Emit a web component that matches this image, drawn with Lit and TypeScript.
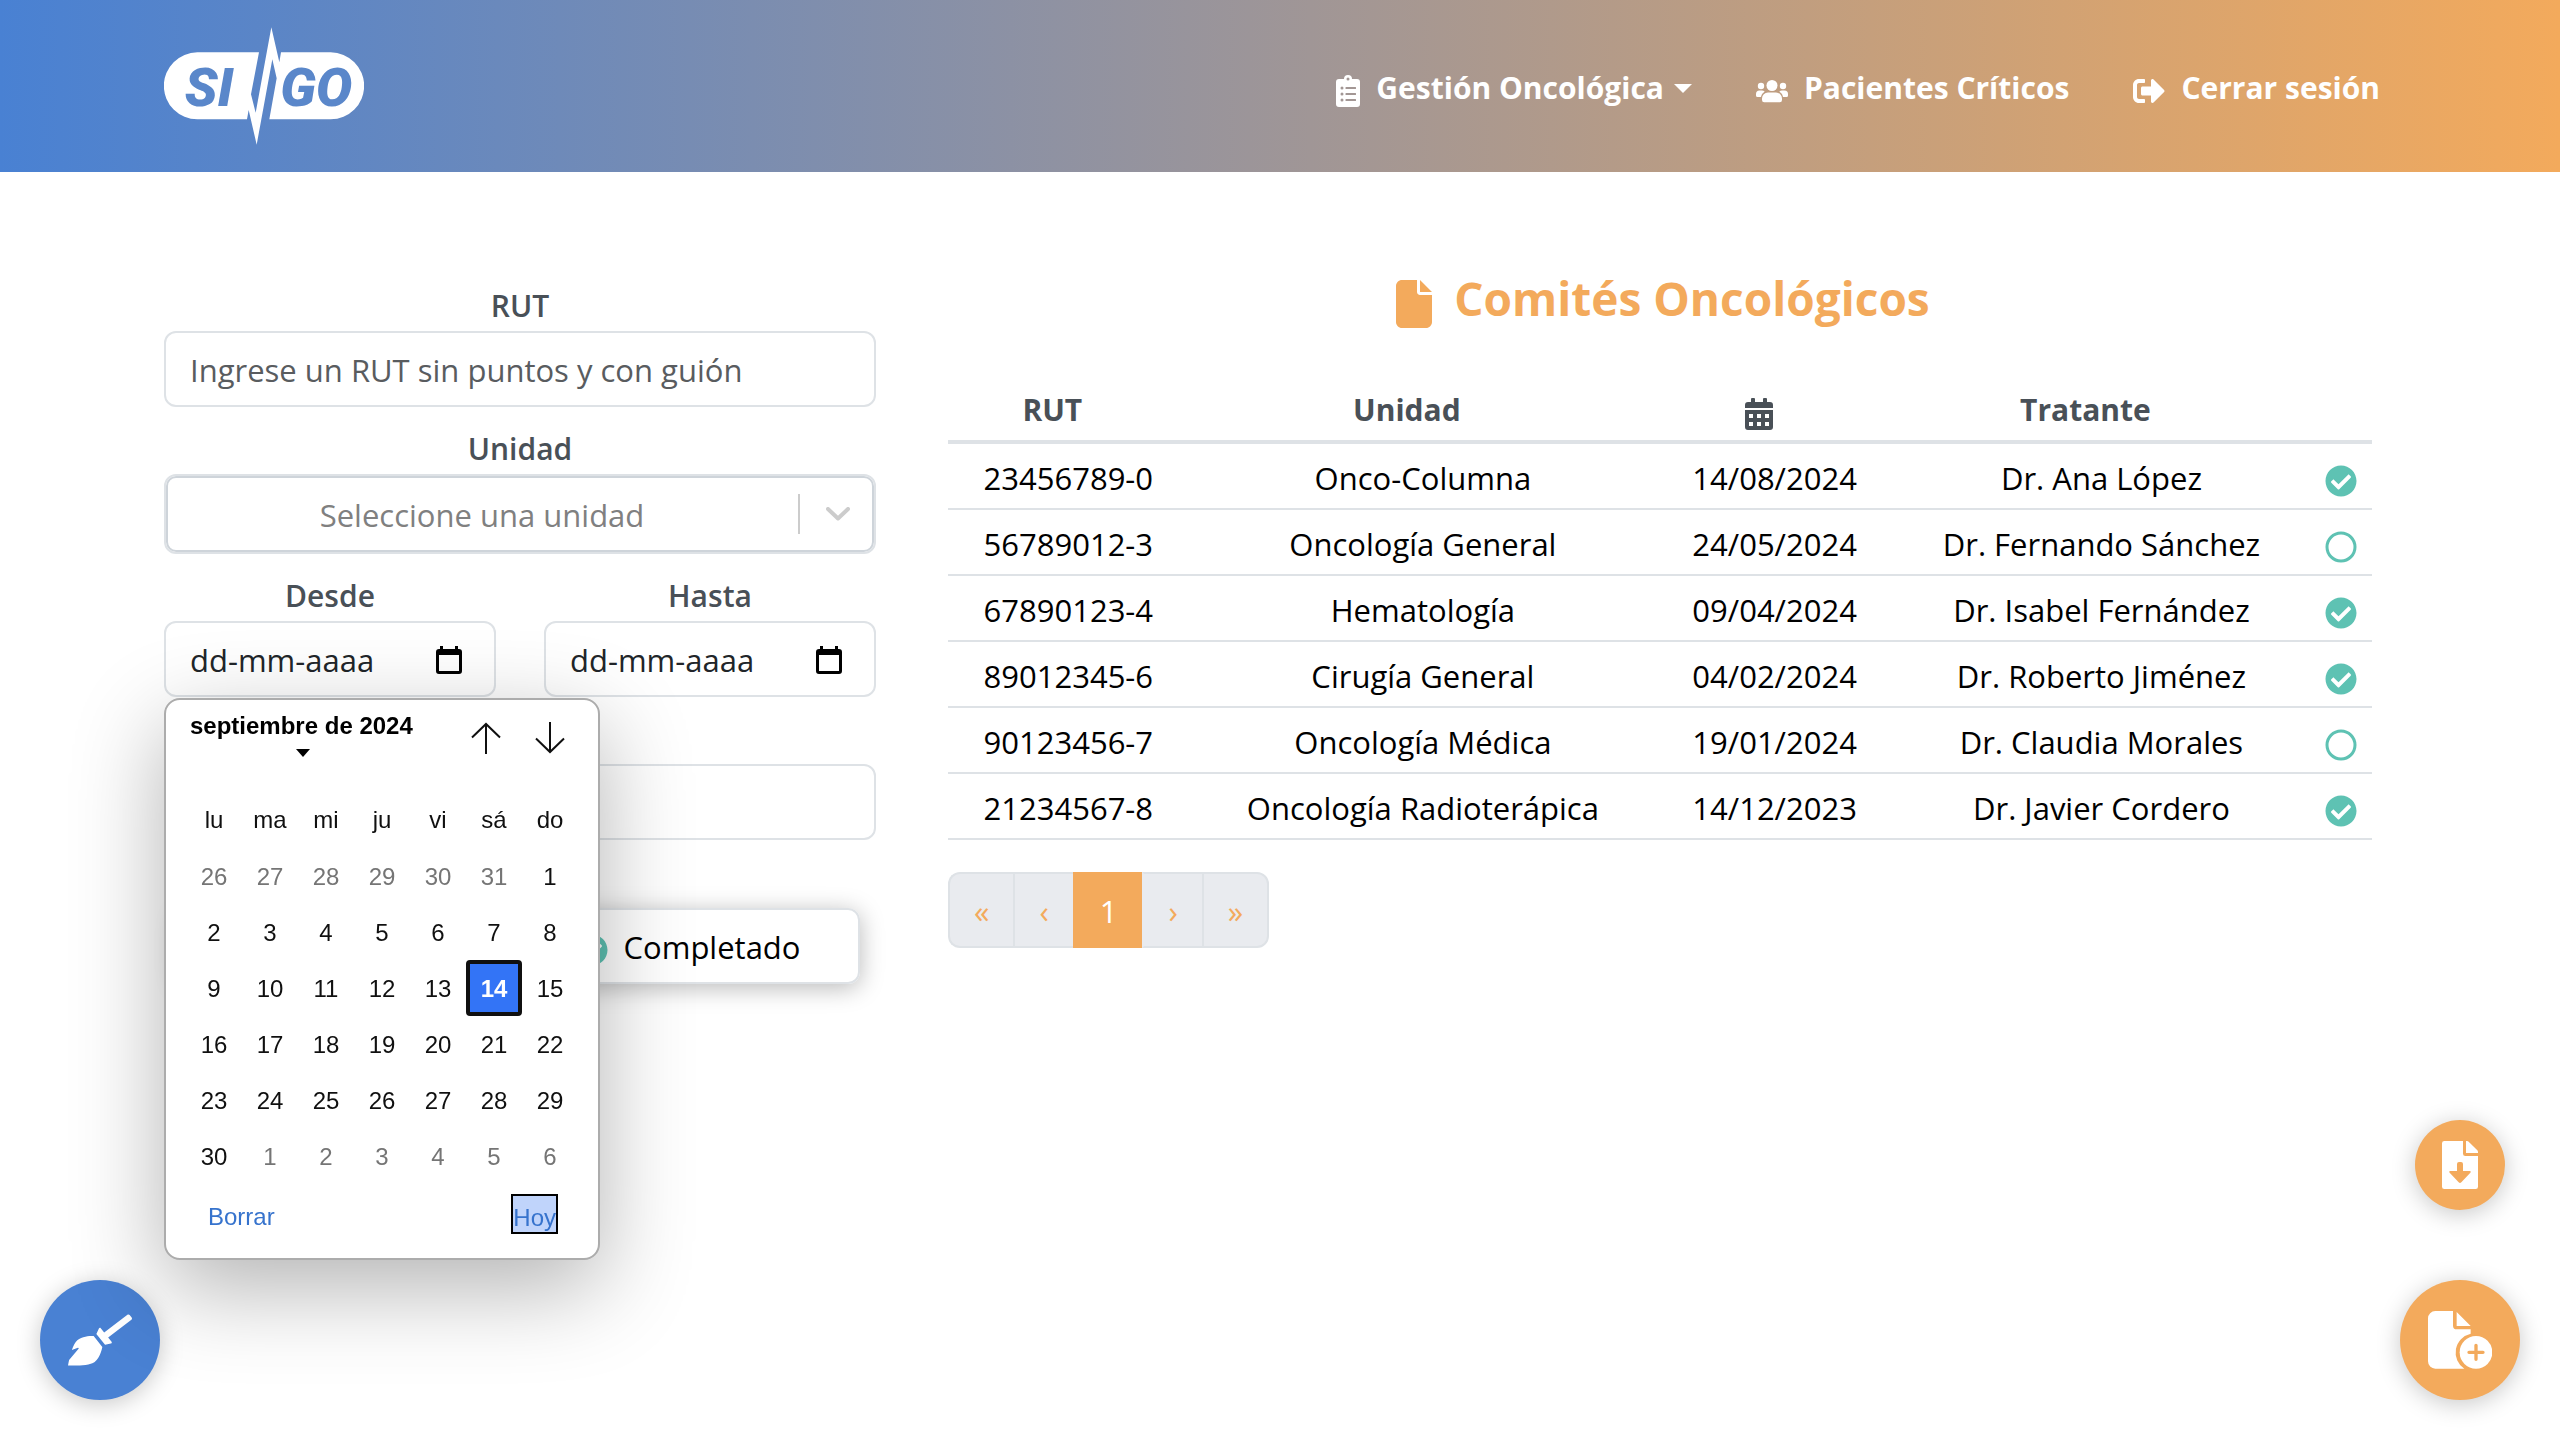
import { LitElement, html, css, nothing } from "lit";
import { customElement, state } from "lit/decorators.js";
import { classMap } from "lit/directives/class-map.js";

interface Comite {
  rut: string;
  unidad: string;
  fecha: string;
  tratante: string;
  completado: boolean;
}

const COMITES: Comite[] = [
  { rut: "23456789-0", unidad: "Onco-Columna", fecha: "14/08/2024", tratante: "Dr. Ana López", completado: true },
  { rut: "56789012-3", unidad: "Oncología General", fecha: "24/05/2024", tratante: "Dr. Fernando Sánchez", completado: false },
  { rut: "67890123-4", unidad: "Hematología", fecha: "09/04/2024", tratante: "Dr. Isabel Fernández", completado: true },
  { rut: "89012345-6", unidad: "Cirugía General", fecha: "04/02/2024", tratante: "Dr. Roberto Jiménez", completado: true },
  { rut: "90123456-7", unidad: "Oncología Médica", fecha: "19/01/2024", tratante: "Dr. Claudia Morales", completado: false },
  { rut: "21234567-8", unidad: "Oncología Radioterápica", fecha: "14/12/2023", tratante: "Dr. Javier Cordero", completado: true },
];

const DIAS = ["lu", "ma", "mi", "ju", "vi", "sá", "do"];

const iconoCheck = html`<svg class="icon-status" viewBox="0 0 512 512" aria-hidden="true">
  <path fill="currentColor" fill-rule="evenodd" d="M504 256c0 136.967-111.033 248-248 248S8 392.967 8 256 119.033 8 256 8s248 111.033 248 248zM227.314 387.314l184-184c6.248-6.248 6.248-16.379 0-22.627l-22.627-22.627c-6.248-6.249-16.379-6.249-22.628 0L216 308.118l-70.059-70.059c-6.248-6.248-16.379-6.248-22.628 0l-22.627 22.627c-6.248 6.248-6.248 16.379 0 22.627l104 104c6.249 6.249 16.379 6.249 22.628.001z"/>
</svg>`;

const iconoCirculo = html`<svg class="icon-status" viewBox="0 0 32 32" aria-hidden="true">
  <circle cx="16" cy="16" r="14" fill="none" stroke="currentColor" stroke-width="3"/>
</svg>`;

const iconoFecha = html`<svg class="icon-date" viewBox="0 0 26 28" aria-hidden="true">
  <path fill="currentColor" fill-rule="evenodd" d="M4 0h3v3h12V0h3v3h1a3 3 0 0 1 3 3v19a3 3 0 0 1-3 3H3a3 3 0 0 1-3-3V6a3 3 0 0 1 3-3h1zM3 9v16h20V9z"/>
</svg>`;

@customElement("calendar-popup")
export class CalendarPopup extends LitElement {
  @state() private elegido = 14;

  static styles = css`
    :host {
      display: block;
      box-sizing: border-box;
      width: 436px;
      padding: 14px 16px 24px 20px;
      border: 2px solid #acacac;
      border-radius: 16px;
      background: #fff;
      box-shadow: 0 28px 92px rgba(0, 0, 0, 0.3);
      font: 24px/32px "Liberation Sans", Arial, sans-serif;
      color: #101010;
    }
    button {
      margin: 0;
      padding: 0;
      border: 0;
      background: none;
      font: inherit;
      color: inherit;
    }
    .head {
      display: flex;
      align-items: flex-start;
      height: 78px;
      padding: 0 0 0 4px;
    }
    .month {
      display: flex;
      flex-direction: column;
      align-items: center;
      gap: 7px;
      margin-right: auto;
      margin-top: -4px;
      font-weight: bold;
      color: #000;
    }
    .caret {
      width: 14px;
      height: 8px;
      margin-left: 4px;
    }
    .arrow {
      display: grid;
      place-items: center;
      width: 64px;
      padding-top: 8px;
    }
    .arrow svg {
      width: 30px;
      height: 32px;
    }
    table {
      border-collapse: collapse;
      table-layout: fixed;
      width: 392px;
    }
    th,
    td {
      padding: 0;
      height: 56px;
      font-weight: normal;
      text-align: center;
    }
    .day {
      display: block;
      box-sizing: border-box;
      width: 56px;
      height: 56px;
      padding-top: 2px;
    }
    .outside {
      color: #757575;
    }
    .selected {
      border: 4px solid #101010;
      border-radius: 4px;
      background: #3374f6;
      color: #fff;
      font-weight: bold;
    }
    .foot {
      display: flex;
      justify-content: space-between;
      align-items: center;
      padding: 10px 24px 0 22px;
      color: #3673cd;
    }
    .clear,
    .today {
      height: 40px;
      padding: 6px 0 0;
    }
    .today {
      border: 2px solid #000;
      background: #c0d4fb;
    }
  `;

  private semanas() {
    const dias = Array.from({ length: 42 }, (_, i) => {
      const d = i - 5;
      if (d < 1) return { n: d + 31, fuera: true };
      if (d > 30) return { n: d - 30, fuera: true };
      return { n: d, fuera: false };
    });
    return Array.from({ length: 6 }, (_, s) => dias.slice(s * 7, s * 7 + 7));
  }

  render() {
    return html`
      <div class="head">
        <button class="month" type="button">
          septiembre de 2024
          <svg class="caret" viewBox="0 0 14 8" aria-hidden="true"><path fill="currentColor" d="M0 0h14L7 8z"/></svg>
        </button>
        <button class="arrow" type="button" aria-label="Mes anterior">
          <svg viewBox="0 0 30 32" fill="none" stroke="currentColor" stroke-width="2" aria-hidden="true"><path d="M15 32V2M1 15.500 15 2l14 13.500"/></svg>
        </button>
        <button class="arrow" type="button" aria-label="Mes siguiente">
          <svg viewBox="0 0 30 32" fill="none" stroke="currentColor" stroke-width="2" aria-hidden="true"><path d="M15 0v30M1 16.500 15 30l14-13.500"/></svg>
        </button>
      </div>
      <table>
        <thead>
          <tr>${DIAS.map((d) => html`<th scope="col">${d}</th>`)}</tr>
        </thead>
        <tbody>
          ${this.semanas().map(
            (semana) => html`<tr>
              ${semana.map(
                (d) => html`<td>
                  <button
                    type="button"
                    class=${classMap({ day: true, outside: d.fuera, selected: !d.fuera && d.n === this.elegido })}
                    @click=${() => { if (!d.fuera) this.elegido = d.n; }}
                  >${d.n}</button>
                </td>`
              )}
            </tr>`
          )}
        </tbody>
      </table>
      <div class="foot">
        <button class="clear" type="button">Borrar</button>
        <button class="today" type="button">Hoy</button>
      </div>
    `;
  }
}

@customElement("app-root")
export class AppRoot extends LitElement {
  static styles = css`
    :host {
      display: block;
      min-height: 100vh;
      background: #fff;
      font: 30px/48px "Open Sans", "Noto Sans", sans-serif;
      color: #000;
    }
    * {
      box-sizing: border-box;
    }
    button,
    input,
    select {
      margin: 0;
      font: inherit;
      color: inherit;
    }
    svg {
      display: block;
      flex: none;
    }

    .navbar {
      display: flex;
      align-items: center;
      justify-content: space-between;
      height: 172px;
      padding: 0 180px 0 164px;
      background: linear-gradient(to right, #4981d3, #f3aa5c);
    }
    .logo svg {
      width: 200px;
      height: 118px;
    }
    .logo-text {
      font: italic 900 162px Roboto, sans-serif;
      fill: #5a87ca;
    }
    nav {
      display: flex;
      gap: 64px;
      padding-top: 4px;
    }
    nav a {
      display: flex;
      align-items: center;
      gap: 16px;
      color: #fff;
      font-weight: 700;
      text-decoration: none;
    }
    nav svg {
      margin-top: 6px;
    }
    .drop {
      display: flex;
      align-items: center;
      gap: 10px;
    }
    .drop svg {
      width: 18px;
      height: 9px;
      margin-top: 0;
    }

    main {
      display: grid;
      grid-template-columns: minmax(0, 1fr) minmax(0, 2fr);
      gap: 72px;
      align-items: start;
      padding: 90px 188px 64px 164px;
    }

    form {
      display: flex;
      flex-direction: column;
      gap: 18px;
      padding-top: 20px;
    }
    .field {
      display: flex;
      flex-direction: column;
      gap: 1px;
      position: relative;
      min-width: 0;
    }
    .pair {
      display: grid;
      grid-template-columns: minmax(0, 1fr) minmax(0, 1fr);
      gap: 48px;
    }
    label {
      color: #495057;
      font-weight: 600;
      text-align: center;
    }
    .box {
      display: flex;
      align-items: center;
      width: 100%;
      height: 76px;
      padding: 2px 24px 0;
      border: 2px solid #dee2e6;
      border-radius: 12px;
      background: #fff;
      font-size: 31px;
    }
    .box::placeholder {
      color: #595c5f;
      opacity: 1;
    }
    .date-input {
      flex: 1;
      min-width: 0;
      padding: 0;
      border: 0;
      background: none;
    }
    .date-input::placeholder {
      color: #212529;
      opacity: 1;
    }
    .date-button {
      padding: 0 8px;
      border: 0;
      background: none;
    }
    .icon-date {
      width: 26px;
      height: 28px;
    }
    .select-box {
      height: 80px;
      padding: 0;
      box-shadow: inset 0 0 0 2px #ced4da;
    }
    select {
      flex: 1;
      min-width: 0;
      height: 72px;
      padding: 2px 0 0;
      border: 0;
      appearance: none;
      background: none;
      color: #808080;
      text-align: center;
      text-align-last: center;
    }
    .divider {
      width: 2px;
      height: 40px;
      background: #ccc;
    }
    .chevron {
      width: 24px;
      height: 14px;
      margin: 0 24px 0 26px;
      color: #ccc;
    }
    calendar-popup {
      position: absolute;
      z-index: 10;
      top: calc(100% + 1px);
      left: 0;
    }
    .spacer-field {
      padding-top: 49px;
    }
    .group {
      display: grid;
      grid-template-columns: minmax(0, 1fr) minmax(0, 1fr);
      margin: 50px 16px 0;
      border-radius: 12px;
      box-shadow: 0 4px 24px rgba(0, 0, 0, 0.28);
    }
    .toggle {
      display: flex;
      align-items: center;
      justify-content: center;
      gap: 16px;
      height: 76px;
      padding: 2px 8px 0 4px;
      border: 2px solid #dee2e6;
      background: #fff;
      font-size: 31px;
    }
    .toggle:first-child {
      border-radius: 12px 0 0 12px;
    }
    .toggle:last-child {
      border-radius: 0 12px 12px 0;
    }
    .icon-status {
      width: 32px;
      height: 32px;
      color: #5ec2b3;
    }
    .toggle .icon-status {
      margin-top: 6px;
    }

    h1 {
      display: flex;
      align-items: center;
      justify-content: center;
      gap: 22px;
      margin: 0 0 42px;
      padding-left: 6px;
      color: #f3aa5c;
      font-size: 46px;
      font-weight: 700;
      line-height: 72px;
    }
    h1 svg {
      width: 36px;
      height: 48px;
      margin-top: 12px;
    }
    .list {
      width: 100%;
      table-layout: fixed;
      border-collapse: separate;
      border-spacing: 0;
      text-align: center;
      white-space: nowrap;
    }
    .list th {
      padding: 10px 32px 6px 0;
      border-bottom: 4px solid #dee2e6;
      color: #495057;
      font-weight: 700;
    }
    .list td {
      padding: 10px 0 6px;
      border-bottom: 2px solid #dee2e6;
      font-size: 31px;
    }
    .list svg {
      margin: 0 auto;
    }
    .list .icon-status {
      margin-top: 6px;
    }
    .icon-cal {
      width: 28px;
      height: 32px;
    }
    .list th .icon-cal {
      margin-top: 8px;
    }
    .col-rut { width: 16.9%; }
    .col-unidad { width: 32.9%; }
    .col-fecha { width: 16.5%; }
    .col-tratante { width: 29.4%; }
    .col-estado { width: 4.3%; }

    .pages {
      display: flex;
      margin: 32px 0 0;
      padding: 0;
      list-style: none;
    }
    .pages button {
      display: block;
      height: 76px;
      padding: 2px 24px 0;
      border: 2px solid #dee2e6;
      border-right-width: 0;
      background: #e9ebef;
      color: #f3aa5c;
      font-size: 31px;
    }
    .pages li:first-child button {
      border-radius: 12px 0 0 12px;
    }
    .pages li:last-child button {
      border-right-width: 2px;
      border-radius: 0 12px 12px 0;
    }
    .pages .active {
      padding: 2px 25px 0;
      border-color: #f3aa5c;
      background: #f3aa5c;
      color: #fff;
    }
    .pages .active-next {
      border-left-color: #e9ebef;
    }

    .fab {
      position: fixed;
      display: grid;
      place-items: center;
      width: 120px;
      height: 120px;
      padding: 0;
      border: 0;
      border-radius: 50%;
      background: #f3aa5c;
      color: #fff;
      box-shadow: 0 4px 24px rgba(0, 0, 0, 0.22);
    }
    .fab-clear {
      left: 40px;
      bottom: 40px;
      background: #4981d3;
    }
    .fab-add {
      right: 40px;
      bottom: 40px;
    }
    .fab-download {
      right: 55px;
      bottom: 230px;
      width: 90px;
      height: 90px;
    }
  `;

  private renderNavbar() {
    return html`<header class="navbar">
      <a class="logo" href="#" aria-label="SIGO">
        <svg viewBox="72 82 600 352">
          <path fill="#fff" d="M357 157 333 283 347 338 394 82 418 187 423 157H572a100.500 100.500 0 0 1 0 201H388L410 235 397 178 350 434 326 330 321 358H172a100.500 100.500 0 0 1 0-201z"/>
          <text class="logo-text" x="134" y="317">SI</text>
          <text class="logo-text" x="421" y="317">GO</text>
        </svg>
      </a>
      <nav>
        <a href="#">
          <svg width="24" height="32" viewBox="0 0 24 32" aria-hidden="true">
            <path fill="currentColor" fill-rule="evenodd" d="M3 4h5a4 4 0 0 1 8 0h5a3 3 0 0 1 3 3v22a3 3 0 0 1-3 3H3a3 3 0 0 1-3-3V7a3 3 0 0 1 3-3zM12 2.500a1.500 1.500 0 1 0 0 3 1.500 1.500 0 0 0 0-3zM6 11.500a1.500 1.500 0 1 0 0 3 1.500 1.500 0 0 0 0-3zM6 17.500a1.500 1.500 0 1 0 0 3 1.500 1.500 0 0 0 0-3zM6 23.500a1.500 1.500 0 1 0 0 3 1.500 1.500 0 0 0 0-3zM10 12h9.500q.5 0 .5.500v1q0 .5-.5.500H10q-.5 0-.5-.500v-1q0-.5.5-.500zM10 18h9.500q.5 0 .5.500v1q0 .5-.5.500H10q-.5 0-.5-.500v-1q0-.5.5-.500zM10 24h9.500q.5 0 .5.500v1q0 .5-.5.500H10q-.5 0-.5-.500v-1q0-.5.5-.500z"/>
          </svg>
          <span class="drop">Gestión Oncológica
            <svg viewBox="0 0 18 9" aria-hidden="true"><path fill="currentColor" d="M0 0h18L9 9z"/></svg>
          </span>
        </a>
        <a href="#">
          <svg width="32" height="24" viewBox="0 0 32 24" aria-hidden="true">
            <g fill="currentColor">
              <circle cx="16" cy="6.500" r="5.500"/>
              <circle cx="5" cy="7" r="3.200"/>
              <circle cx="27" cy="7" r="3.200"/>
              <path d="M12 13.500h8a6 6 0 0 1 6 6v1.500a2.200 2.200 0 0 1-2.200 2.200H8.200A2.200 2.200 0 0 1 6 21v-1.500a6 6 0 0 1 6-6z"/>
              <path d="M3.500 11.500H6q1.500 0 2.700 1-3.200 2-3.800 5.500H1.500A1.500 1.500 0 0 1 0 16.500V15a3.500 3.500 0 0 1 3.500-3.500z"/>
              <path d="M28.500 11.500H26q-1.500 0-2.700 1 3.200 2 3.800 5.500h3.400a1.500 1.500 0 0 0 1.500-1.500V15a3.500 3.500 0 0 0-3.500-3.500z"/>
            </g>
          </svg>
          Pacientes Críticos
        </a>
        <a href="#">
          <svg width="32" height="32" viewBox="0 0 512 512" aria-hidden="true">
            <path fill="currentColor" d="M497 273L329 441c-15 15-41 4.500-41-17v-96H152c-13.300 0-24-10.700-24-24v-96c0-13.300 10.700-24 24-24h136V88c0-21.400 25.900-32 41-17l168 168c9.300 9.400 9.300 24.600 0 34zM192 436v-40c0-6.600-5.400-12-12-12H96c-17.700 0-32-14.300-32-32V160c0-17.700 14.300-32 32-32h84c6.600 0 12-5.400 12-12V76c0-6.600-5.400-12-12-12H96c-53 0-96 43-96 96v192c0 53 43 96 96 96h84c6.600 0 12-5.400 12-12z"/>
          </svg>
          Cerrar sesión
        </a>
      </nav>
    </header>`;
  }

  private renderFecha(id: string, etiqueta: string, abierto: boolean) {
    return html`<div class="field">
      <label for=${id}>${etiqueta}</label>
      <div class="box">
        <input class="date-input" id=${id} type="text" placeholder="dd-mm-aaaa" />
        <button class="date-button" type="button" aria-label="Abrir calendario">${iconoFecha}</button>
      </div>
      ${abierto ? html`<calendar-popup></calendar-popup>` : nothing}
    </div>`;
  }

  private renderFiltros() {
    return html`<form>
      <div class="field">
        <label for="rut">RUT</label>
        <input class="box" id="rut" type="text" placeholder="Ingrese un RUT sin puntos y con guión" />
      </div>
      <div class="field">
        <label for="unidad">Unidad</label>
        <div class="box select-box">
          <select id="unidad"><option>Seleccione una unidad</option></select>
          <span class="divider"></span>
          <svg class="chevron" viewBox="0 0 24 14" fill="none" stroke="currentColor" stroke-width="4" stroke-linecap="round" stroke-linejoin="round" aria-hidden="true"><path d="m2 2 10 9.500L22 2"/></svg>
        </div>
      </div>
      <div class="pair">
        ${this.renderFecha("desde", "Desde", true)}
        ${this.renderFecha("hasta", "Hasta", false)}
      </div>
      <div class="field spacer-field">
        <input class="box" type="text" aria-label="Tratante" />
      </div>
      <div class="group">
        <button class="toggle" type="button" aria-label="Pendiente">${iconoCirculo}</button>
        <button class="toggle" type="button">${iconoCheck}Completado</button>
      </div>
    </form>`;
  }

  private renderTabla() {
    return html`<table class="list">
      <colgroup>
        <col class="col-rut" /><col class="col-unidad" /><col class="col-fecha" /><col class="col-tratante" /><col class="col-estado" />
      </colgroup>
      <thead>
        <tr>
          <th scope="col">RUT</th>
          <th scope="col">Unidad</th>
          <th scope="col" aria-label="Fecha">
            <svg class="icon-cal" viewBox="0 0 28 32" aria-hidden="true">
              <path fill="currentColor" fill-rule="evenodd" d="M6 1a1 1 0 0 1 1-1h2a1 1 0 0 1 1 1v3h8V1a1 1 0 0 1 1-1h2a1 1 0 0 1 1 1v3h3a3 3 0 0 1 3 3v3H0V7a3 3 0 0 1 3-3h3zM0 12h28v17a3 3 0 0 1-3 3H3a3 3 0 0 1-3-3zM4 16v4h4v-4zM12 16v4h4v-4zM20 16v4h4v-4zM4 24v4h4v-4zM12 24v4h4v-4zM20 24v4h4v-4z"/>
            </svg>
          </th>
          <th scope="col">Tratante</th>
          <th></th>
        </tr>
      </thead>
      <tbody>
        ${COMITES.map(
          (c) => html`<tr>
            <td>${c.rut}</td>
            <td>${c.unidad}</td>
            <td>${c.fecha}</td>
            <td>${c.tratante}</td>
            <td>${c.completado ? iconoCheck : iconoCirculo}</td>
          </tr>`
        )}
      </tbody>
    </table>`;
  }

  render() {
    return html`
      ${this.renderNavbar()}
      <main>
        ${this.renderFiltros()}
        <section>
          <h1>
            <svg viewBox="0 0 384 512" aria-hidden="true">
              <path fill="currentColor" d="M0 64C0 28.700 28.700 0 64 0H224V128c0 17.700 14.300 32 32 32H384V448c0 35.300-28.700 64-64 64H64c-35.300 0-64-28.700-64-64zM384 128H256V0z"/>
            </svg>
            Comités Oncológicos
          </h1>
          ${this.renderTabla()}
          <ul class="pages">
            <li><button type="button">«</button></li>
            <li><button type="button">‹</button></li>
            <li><button class="active" type="button">1</button></li>
            <li><button class="active-next" type="button">›</button></li>
            <li><button type="button">»</button></li>
          </ul>
        </section>
      </main>
      <button class="fab fab-clear" type="button" aria-label="Limpiar filtros">
        <svg width="64" height="52" viewBox="0 0 640 512" aria-hidden="true">
          <path fill="currentColor" d="M256.470 216.770l86.730 109.180s-16.600 102.360-76.570 150.120C206.660 523.850 0 510.190 0 510.190s3.800-23.140 11-55.430l94.620-112.170c3.970-4.700-.870-11.620-6.650-9.500l-60.400 22.090c14.440-41.660 32.720-80.040 54.600-97.470 59.970-47.760 163.300-40.940 163.300-40.940zM636.530 31.030l-19.860-25c-5.490-6.900-15.520-8.050-22.410-2.560l-232.480 177.800-34.140-42.970c-5.090-6.410-15.140-5.210-18.590 2.210l-25.330 54.550 86.730 109.180 58.800-12.450c8-1.690 11.420-11.200 6.340-17.600l-34.090-42.920 232.480-177.800c6.890-5.480 8.040-15.530 2.550-22.440z"/>
        </svg>
      </button>
      <button class="fab fab-download" type="button" aria-label="Descargar">
        <svg width="36" height="48" viewBox="0 0 108 144" aria-hidden="true">
          <path fill="currentColor" fill-rule="evenodd" d="M7 0H63V38a7 7 0 0 0 7 7h38v92a7 7 0 0 1-7 7H7a7 7 0 0 1-7-7V7a7 7 0 0 1 7-7zM45 69V90H25q-6 0-2 5l27 29q4 4 8 0l27-29q4-5-2-5H63V69q0-6-6-6h-6q-6 0-6 6zM72 0h3q3 0 5 2l26 26q2 2 2 5v3H72z"/>
        </svg>
      </button>
      <button class="fab fab-add" type="button" aria-label="Nuevo comité">
        <svg width="64" height="58" viewBox="0 0 192 174" aria-hidden="true">
          <path fill="currentColor" d="M22 0H75V44a11 11 0 0 0 11 11h42V68A58 58 0 0 0 109 173H22A22 22 0 0 1 0 151V22A22 22 0 0 1 22 0zM86 3l42 42H86z"/>
          <circle cx="144" cy="124" r="49" fill="currentColor"/>
          <path fill="none" stroke="#f3aa5c" stroke-width="10" stroke-linecap="round" d="M123 124h42M144 103v42"/>
        </svg>
      </button>
    `;
  }
}
